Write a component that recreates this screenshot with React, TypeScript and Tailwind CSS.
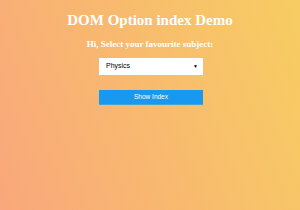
export default function App() {
  return (
    <div className="flex min-h-[210px] w-full flex-col items-center bg-[linear-gradient(69deg,#f9a77b,#f7cd62)] pt-[11px]">
      <h1 className="font-['Liberation_Serif',serif] text-[15px] font-bold leading-[18px] text-white">
        DOM Option index Demo
      </h1>
      <h3 className="mt-[10px] font-['Liberation_Serif',serif] text-[9px] font-bold leading-[11px] text-white">
        Hi, Select your favourite subject:
      </h3>
      <div className="relative ml-[2px] mt-[8px] w-[104px]">
        <select
          defaultValue="Physics"
          className="block h-[17px] w-full appearance-none rounded-none bg-white pl-[7px] font-['Liberation_Sans',sans-serif] text-[7px] text-black outline-none"
        >
          <option>Physics</option>
          <option>Chemistry</option>
          <option>Maths</option>
          <option>Biology</option>
        </select>
        <span className="pointer-events-none absolute right-[5px] top-[5px] text-[5px] leading-[6px] text-black">
          ▼
        </span>
      </div>
      <button className="ml-[2px] mt-[15px] h-[15px] w-[104px] border-b border-[#4aa3c8] bg-[#1799f2] font-['Liberation_Sans',sans-serif] text-[6.5px] text-white">
        Show Index
      </button>
    </div>
  );
}
